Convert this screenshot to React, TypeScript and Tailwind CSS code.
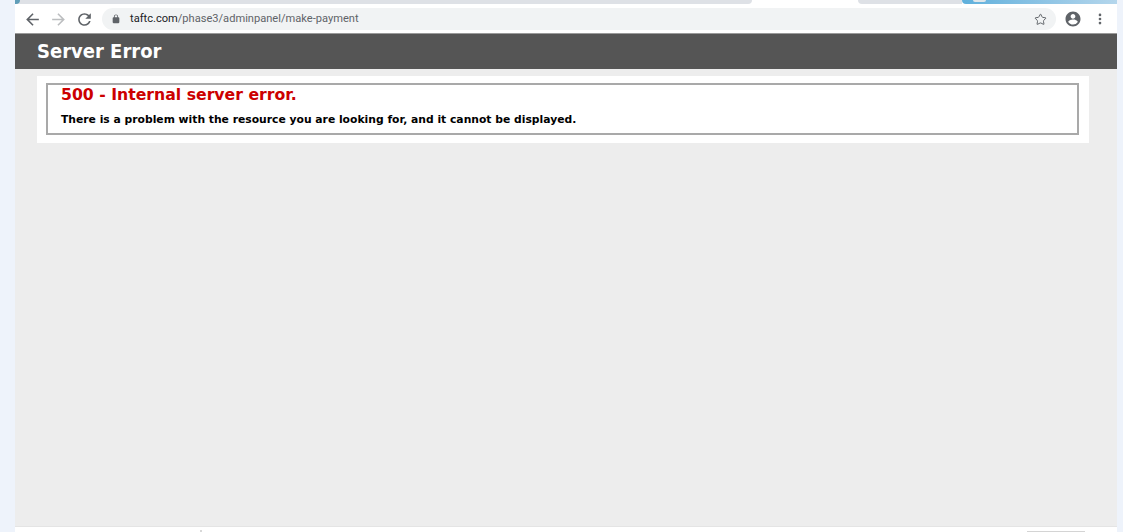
import { Star, EllipsisVertical } from "lucide-react";

function ToolIcon({ d, className }: { d: string; className: string }) {
  return (
    <svg viewBox="0 0 24 24" className={className} fill="currentColor">
      <path d={d} />
    </svg>
  );
}

const backPath = "M20 11H7.83l5.59-5.59L12 4l-8 8 8 8 1.41-1.41L7.83 13H20v-2z";
const forwardPath = "M4 11h12.17l-5.59-5.59L12 4l8 8-8 8-1.41-1.41L16.17 13H4v-2z";
const reloadPath =
  "M17.65 6.35C16.2 4.9 14.21 4 12 4c-4.42 0-7.99 3.58-7.99 8s3.57 8 7.99 8c3.73 0 6.84-2.55 7.73-6h-2.08c-.82 2.33-3.04 4-5.65 4-3.31 0-6-2.69-6-6s2.69-6 6-6c1.66 0 3.14.69 4.22 1.78L13 11h7V4l-2.35 2.35z";
const lockPath =
  "M18 8h-1V6c0-2.76-2.24-5-5-5S7 3.24 7 6v2H6c-1.1 0-2 .9-2 2v10c0 1.1.9 2 2 2h12c1.1 0 2-.9 2-2V10c0-1.1-.9-2-2-2zM9 6c0-1.66 1.34-3 3-3s3 1.34 3 3v2H9V6z";
const profilePath =
  "M12 2C6.48 2 2 6.48 2 12s4.48 10 10 10 10-4.48 10-10S17.52 2 12 2zm0 3.2c1.77 0 3.2 1.43 3.2 3.2S13.77 11.6 12 11.6 8.8 10.17 8.8 8.4 10.23 5.2 12 5.2zm0 14.2c-2.67 0-5.02-1.36-6.4-3.43.03-2.12 4.27-3.29 6.4-3.29s6.37 1.17 6.4 3.29A7.68 7.68 0 0 1 12 19.4z";

export default function App() {
  return (
    <div className="flex h-[532px] w-[1123px] overflow-hidden bg-[#eef3fb] pl-[15px] pr-[6px] font-['Liberation_Sans',sans-serif]">
      <div className="flex min-w-0 flex-1 flex-col bg-[#ededed]">
        {/* tab strip */}
        <div className="relative flex h-1 overflow-hidden bg-white">
          <div className="h-full w-[737px] rounded-br-[5px] bg-[#dee1e6]" />
          <div className="ml-[106px] h-full w-[104px] rounded-bl-[5px] bg-[#dee1e6]" />
          <div className="h-full flex-1 rounded-bl-[6px] bg-gradient-to-r from-[#5fb0dc] to-[#b4d6ec]" />
          <div className="absolute left-0 top-0 h-[4px] w-[5px] rounded-br-full bg-[#5f9db8]" />
          <div className="absolute left-[958px] top-0 h-[2px] w-[13px] rounded-b-full bg-[#dfe6ea]" />
        </div>

        {/* browser toolbar */}
        <div className="flex h-[29px] items-center bg-white pb-[3px] pl-[8px] pr-[10px] pt-[4px]">
          <ToolIcon d={backPath} className="mt-px h-[19px] w-[19px] text-[#5f6368]" />
          <ToolIcon d={forwardPath} className="ml-[7px] mt-px h-[19px] w-[19px] text-[#bcbec0]" />
          <ToolIcon d={reloadPath} className="ml-[7px] mt-px h-[19px] w-[19px] text-[#5f6368]" />
          <div className="ml-[8px] flex h-[22px] flex-1 items-center rounded-full bg-[#f1f3f4] pl-[9px] pr-[9px]">
            <ToolIcon d={lockPath} className="h-[10px] w-[10px] text-[#5f6368]" />
            <span className="ml-[9px] mt-px font-['Roboto',sans-serif] text-[11.1px] text-[#5f6368]">
              <span className="text-[#202124]">taftc.com</span>/phase3/adminpanel/make-payment
            </span>
            <Star size={13} strokeWidth={1.8} className="ml-auto text-[#5f6368]" />
          </div>
          <ToolIcon d={profilePath} className="ml-[8px] h-[18px] w-[18px] text-[#5f6368]" />
          <EllipsisVertical size={14} strokeWidth={2.6} className="ml-[11px] text-[#5f6368]" />
        </div>

        {/* error page */}
        <div className="h-[36px] border-t border-[#9a9a9a] bg-[#555555] pl-[22px]">
          <h1 className="font-['DejaVu_Sans_Condensed','DejaVu_Sans',sans-serif] text-[20px] font-bold leading-[35px] text-white">
            Server Error
          </h1>
        </div>
        <div className="flex-1 px-[22px] pt-[7px]">
          <div className="h-[67px] w-[1052px] bg-white pl-[9px] pr-[10px] pt-[7px]">
            <div className="h-[52px] border-2 border-[#a9a9a9] pl-[13px]">
              <h2 className="font-['DejaVu_Sans',sans-serif] text-[15.7px] font-bold leading-[20px] text-[#cc0000]">
                500 - Internal server error.
              </h2>
              <h3 className="mt-[8px] font-['DejaVu_Sans',sans-serif] text-[10.77px] font-bold leading-[14px] text-black">
                There is a problem with the resource you are looking for, and it cannot be displayed.
              </h3>
            </div>
          </div>
        </div>

        {/* bottom strip */}
        <div className="relative h-[6px] border-t border-[#e4e4e4] bg-white">
          <div className="absolute left-[185px] top-[3px] h-[2px] w-[2px] bg-[#d8d8d8]" />
          <div className="absolute left-[1012px] top-[4px] h-px w-[58px] bg-[#d4d4d4]" />
        </div>
      </div>
    </div>
  );
}
